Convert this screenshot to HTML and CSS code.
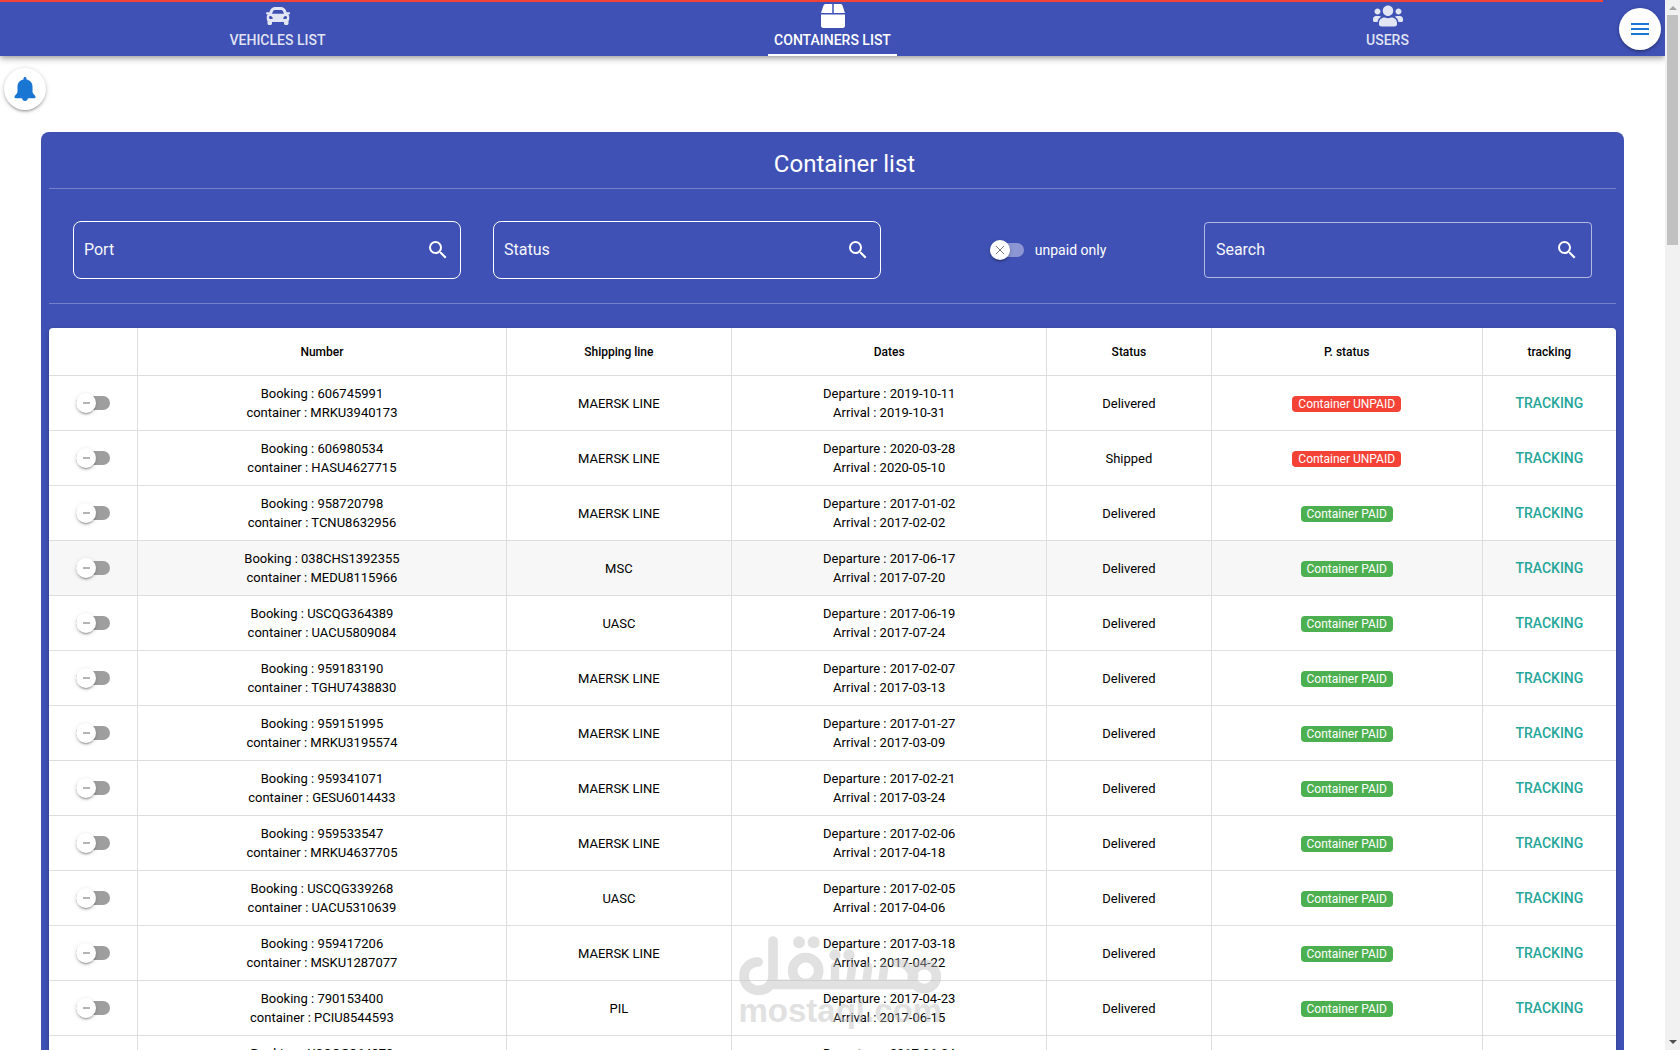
FILE: index.html
```html
<!DOCTYPE html>
<html lang="en">
<head>
<meta charset="UTF-8" />
<meta name="viewport" content="width=device-width, initial-scale=1" />
<title>Containers list</title>
<link rel="stylesheet" href="styles.css">
</head>
<body>

  <div class="app">
    <header class="header">
      <div class="loading-bar"></div>
      <nav class="tabs">
        <a class="tab" href="#vehicles">
          <svg class="tab-icon" viewBox="0 0 512 512" aria-hidden="true"><path d="M499.99 176h-59.87l-16.64-41.6C406.38 91.63 365.57 64 319.5 64h-127c-46.06 0-86.88 27.63-103.99 70.4L71.87 176H12.01C4.2 176-1.53 183.34.37 190.91l6 24C7.7 220.25 12.5 224 18.01 224h20.07C24.65 235.73 16 252.78 16 272v48c0 16.12 6.16 30.67 16 41.93V416c0 17.67 14.33 32 32 32h32c17.67 0 32-14.33 32-32v-32h256v32c0 17.67 14.33 32 32 32h32c17.67 0 32-14.33 32-32v-54.07c9.84-11.25 16-25.8 16-41.93v-48c0-19.22-8.65-36.27-22.07-48H494c5.51 0 10.31-3.75 11.64-9.09l6-24c1.89-7.57-3.84-14.91-11.65-14.91zm-352.06-17.83c7.29-18.22 24.94-30.17 44.57-30.17h127c19.63 0 37.28 11.95 44.57 30.17L384 208H128l19.93-49.83zM96 319.8c-19.2 0-32-12.76-32-31.9S76.8 256 96 256s48 28.71 48 47.85-28.8 15.95-48 15.95zm320 0c-19.2 0-48 3.19-48-15.95S396.8 256 416 256s32 12.76 32 31.9-12.8 31.9-32 31.9z"/></svg>
          <span class="tab-label">Vehicles list</span>
        </a>
        <a class="tab active" href="#containers" aria-current="page">
          <svg class="tab-icon" viewBox="0 0 512 512" aria-hidden="true"><path d="M509.5 184.6L458.9 32.8C452.4 13.2 434.1 0 413.4 0H272v192h238.7c-.4-2.5-.4-5-1.2-7.4zM240 0H98.6c-20.7 0-39 13.2-45.5 32.8L2.5 184.6c-.8 2.4-.8 4.9-1.2 7.4H240V0zM0 224v240c0 26.5 21.5 48 48 48h416c26.5 0 48-21.5 48-48V224H0z"/></svg>
          <span class="tab-label">Containers list</span>
        </a>
        <a class="tab" href="#users">
          <svg class="tab-icon wide" viewBox="0 0 640 512" aria-hidden="true"><path d="M96 224c35.3 0 64-28.7 64-64s-28.7-64-64-64-64 28.7-64 64 28.7 64 64 64zm448 0c35.3 0 64-28.7 64-64s-28.7-64-64-64-64 28.7-64 64 28.7 64 64 64zm32 32h-64c-17.6 0-33.5 7.1-45.1 18.6 40.3 22.1 68.9 62 75.1 109.4h66c17.7 0 32-14.3 32-32v-32c0-35.3-28.7-64-64-64zm-256 0c61.9 0 112-50.1 112-112S381.9 32 320 32 208 82.1 208 144s50.1 112 112 112zm76.8 32h-8.3c-20.8 10-43.9 16-68.5 16s-47.6-6-68.5-16h-8.3C179.6 288 128 339.6 128 403.2V432c0 26.5 21.5 48 48 48h288c26.5 0 48-21.5 48-48v-28.8c0-63.6-51.6-115.2-115.2-115.2zm-223.7-13.4C161.5 263.1 145.6 256 128 256H64c-35.3 0-64 28.7-64 64v32c0 17.7 14.3 32 32 32h65.9c6.3-47.4 34.9-87.3 75.2-109.4z"/></svg>
          <span class="tab-label">Users</span>
        </a>
      </nav>
      <button type="button" class="round-btn menu-btn" aria-label="Menu">
        <svg viewBox="0 0 24 24" aria-hidden="true"><path d="M3 18h18v-2H3v2zm0-5h18v-2H3v2zm0-7v2h18V6H3z"/></svg>
      </button>
    </header>

    <button type="button" class="round-btn bell-btn" aria-label="Notifications">
      <svg viewBox="0 0 24 24" aria-hidden="true"><path d="M12 0c-.9 0-1.500.7-1.500 1.500v1C6.800 3.200 4.500 6 4.500 9.500v4.500c0 1.600-.5 2.500-1.500 3.600-1 1-1.500 1.400-1.500 2.400 0 .8.500 1.200 1.300 1.200h6.300c.1 1.600 1.300 2.800 2.900 2.800s2.800-1.200 2.900-2.800h6.300c.8 0 1.300-.4 1.300-1.200 0-1-.5-1.400-1.500-2.400-1-1.100-1.500-2-1.500-3.600V9.500c0-3.500-2.300-6.300-6-7v-1C13.500.7 12.900 0 12 0z"/></svg>
    </button>

    <main class="card">
      <h1 class="card-title">Container list</h1>

      <div class="filters">
        <div class="field outlined">
          <input type="text" placeholder="Port" aria-label="Port" />
          <svg viewBox="0 0 24 24" aria-hidden="true"><path d="M15.500 14h-.79l-.28-.27A6.471 6.471 0 0 0 16 9.500 6.500 6.500 0 1 0 9.500 16c1.610 0 3.090-.59 4.230-1.570l.27.28v.79l5 4.990L20.490 19l-4.990-5zm-6 0C7.010 14 5 11.990 5 9.500S7.010 5 9.500 5 14 7.010 14 9.500 11.990 14 9.500 14z"/></svg>
        </div>
        <div class="field outlined">
          <input type="text" placeholder="Status" aria-label="Status" />
          <svg viewBox="0 0 24 24" aria-hidden="true"><path d="M15.500 14h-.79l-.28-.27A6.471 6.471 0 0 0 16 9.500 6.500 6.500 0 1 0 9.500 16c1.610 0 3.090-.59 4.230-1.570l.27.28v.79l5 4.990L20.490 19l-4.990-5zm-6 0C7.010 14 5 11.990 5 9.500S7.010 5 9.500 5 14 7.010 14 9.500 11.990 14 9.500 14z"/></svg>
        </div>
        <label class="unpaid">
          <input type="checkbox" class="toggle cross" />
          <span>unpaid only</span>
        </label>
        <div class="field">
          <input type="text" placeholder="Search" aria-label="Search" />
          <svg viewBox="0 0 24 24" aria-hidden="true"><path d="M15.500 14h-.79l-.28-.27A6.471 6.471 0 0 0 16 9.500 6.500 6.500 0 1 0 9.500 16c1.610 0 3.090-.59 4.230-1.570l.27.28v.79l5 4.990L20.490 19l-4.990-5zm-6 0C7.010 14 5 11.990 5 9.500S7.010 5 9.500 5 14 7.010 14 9.500 11.990 14 9.500 14z"/></svg>
        </div>
      </div>

      <table class="list">
        <colgroup>
          <col class="col-toggle"><col class="col-number"><col class="col-line"><col class="col-dates"><col class="col-status"><col class="col-paid"><col class="col-tracking">
        </colgroup>
        <thead>
          <tr><th></th><th>Number</th><th>Shipping line</th><th>Dates</th><th>Status</th><th>P. status</th><th>tracking</th></tr>
        </thead>
        <tbody>
          <tr>
            <td><input type="checkbox" class="toggle" aria-label="Select 606745991"></td>
            <td>Booking : 606745991<br>container : MRKU3940173</td>
            <td>MAERSK LINE</td>
            <td>Departure : 2019-10-11<br>Arrival : 2019-10-31</td>
            <td>Delivered</td>
            <td><span class="badge unpaid-badge">Container UNPAID</span></td>
            <td><button type="button" class="tracking">Tracking</button></td>
          </tr>
          <tr>
            <td><input type="checkbox" class="toggle" aria-label="Select 606980534"></td>
            <td>Booking : 606980534<br>container : HASU4627715</td>
            <td>MAERSK LINE</td>
            <td>Departure : 2020-03-28<br>Arrival : 2020-05-10</td>
            <td>Shipped</td>
            <td><span class="badge unpaid-badge">Container UNPAID</span></td>
            <td><button type="button" class="tracking">Tracking</button></td>
          </tr>
          <tr>
            <td><input type="checkbox" class="toggle" aria-label="Select 958720798"></td>
            <td>Booking : 958720798<br>container : TCNU8632956</td>
            <td>MAERSK LINE</td>
            <td>Departure : 2017-01-02<br>Arrival : 2017-02-02</td>
            <td>Delivered</td>
            <td><span class="badge">Container PAID</span></td>
            <td><button type="button" class="tracking">Tracking</button></td>
          </tr>
          <tr class="hovered">
            <td><input type="checkbox" class="toggle" aria-label="Select 038CHS1392355"></td>
            <td>Booking : 038CHS1392355<br>container : MEDU8115966</td>
            <td>MSC</td>
            <td>Departure : 2017-06-17<br>Arrival : 2017-07-20</td>
            <td>Delivered</td>
            <td><span class="badge">Container PAID</span></td>
            <td><button type="button" class="tracking">Tracking</button></td>
          </tr>
          <tr>
            <td><input type="checkbox" class="toggle" aria-label="Select USCQG364389"></td>
            <td>Booking : USCQG364389<br>container : UACU5809084</td>
            <td>UASC</td>
            <td>Departure : 2017-06-19<br>Arrival : 2017-07-24</td>
            <td>Delivered</td>
            <td><span class="badge">Container PAID</span></td>
            <td><button type="button" class="tracking">Tracking</button></td>
          </tr>
          <tr>
            <td><input type="checkbox" class="toggle" aria-label="Select 959183190"></td>
            <td>Booking : 959183190<br>container : TGHU7438830</td>
            <td>MAERSK LINE</td>
            <td>Departure : 2017-02-07<br>Arrival : 2017-03-13</td>
            <td>Delivered</td>
            <td><span class="badge">Container PAID</span></td>
            <td><button type="button" class="tracking">Tracking</button></td>
          </tr>
          <tr>
            <td><input type="checkbox" class="toggle" aria-label="Select 959151995"></td>
            <td>Booking : 959151995<br>container : MRKU3195574</td>
            <td>MAERSK LINE</td>
            <td>Departure : 2017-01-27<br>Arrival : 2017-03-09</td>
            <td>Delivered</td>
            <td><span class="badge">Container PAID</span></td>
            <td><button type="button" class="tracking">Tracking</button></td>
          </tr>
          <tr>
            <td><input type="checkbox" class="toggle" aria-label="Select 959341071"></td>
            <td>Booking : 959341071<br>container : GESU6014433</td>
            <td>MAERSK LINE</td>
            <td>Departure : 2017-02-21<br>Arrival : 2017-03-24</td>
            <td>Delivered</td>
            <td><span class="badge">Container PAID</span></td>
            <td><button type="button" class="tracking">Tracking</button></td>
          </tr>
          <tr>
            <td><input type="checkbox" class="toggle" aria-label="Select 959533547"></td>
            <td>Booking : 959533547<br>container : MRKU4637705</td>
            <td>MAERSK LINE</td>
            <td>Departure : 2017-02-06<br>Arrival : 2017-04-18</td>
            <td>Delivered</td>
            <td><span class="badge">Container PAID</span></td>
            <td><button type="button" class="tracking">Tracking</button></td>
          </tr>
          <tr>
            <td><input type="checkbox" class="toggle" aria-label="Select USCQG339268"></td>
            <td>Booking : USCQG339268<br>container : UACU5310639</td>
            <td>UASC</td>
            <td>Departure : 2017-02-05<br>Arrival : 2017-04-06</td>
            <td>Delivered</td>
            <td><span class="badge">Container PAID</span></td>
            <td><button type="button" class="tracking">Tracking</button></td>
          </tr>
          <tr>
            <td><input type="checkbox" class="toggle" aria-label="Select 959417206"></td>
            <td>Booking : 959417206<br>container : MSKU1287077</td>
            <td>MAERSK LINE</td>
            <td>Departure : 2017-03-18<br>Arrival : 2017-04-22</td>
            <td>Delivered</td>
            <td><span class="badge">Container PAID</span></td>
            <td><button type="button" class="tracking">Tracking</button></td>
          </tr>
          <tr>
            <td><input type="checkbox" class="toggle" aria-label="Select 790153400"></td>
            <td>Booking : 790153400<br>container : PCIU8544593</td>
            <td>PIL</td>
            <td>Departure : 2017-04-23<br>Arrival : 2017-06-15</td>
            <td>Delivered</td>
            <td><span class="badge">Container PAID</span></td>
            <td><button type="button" class="tracking">Tracking</button></td>
          </tr>
          <tr>
            <td><input type="checkbox" class="toggle" aria-label="Select USCQG364378"></td>
            <td>Booking : USCQG364378<br>container : UACU5364372</td>
            <td>UASC</td>
            <td>Departure : 2017-06-24<br>Arrival : 2017-07-24</td>
            <td>Delivered</td>
            <td><span class="badge">Container PAID</span></td>
            <td><button type="button" class="tracking">Tracking</button></td>
          </tr>
        </tbody>
      </table>
    </main>

    <div class="watermark">
      <svg viewBox="0 0 606 180" aria-hidden="true">
        <g fill="none" stroke="#bebebe" stroke-width="29" stroke-linecap="round">
          <path d="M57 78C30 78 15 98 15 120c0 24 18 43 43 43 26 0 44-18 44-44V15"/>
          <path d="M96 145H520"/>
          <circle cx="200" cy="104" r="39"/>
          <path d="M288 92v40M340 92l-6 40M388 92l-6 44M436 92l-6 44" stroke-width="25"/>
          <path d="M470 80c30-2 40 18 56 40" stroke-width="25"/>
          <circle cx="556" cy="122" r="36"/>
        </g>
        <g fill="#bebebe">
          <circle cx="180" cy="19" r="18"/>
          <circle cx="224" cy="19" r="18"/>
          <circle cx="288" cy="57" r="17"/>
          <circle cx="330" cy="57" r="17"/>
        </g>
      </svg>
      <span>mostaql.com</span>
    </div>
  </div>

  <div class="scrollbar" aria-hidden="true">
    <div class="arrow-up"></div>
    <div class="thumb"></div>
    <div class="arrow-down"></div>
  </div>

</body>
</html>
```
FILE: styles.css
```css
* {
  box-sizing: border-box;
}
body {
  margin: 0;
  display: flex;
  height: 100vh;
  overflow: hidden;
  font-family: Roboto, "Liberation Sans", sans-serif;
  font-size: 14px;
  color: #000;
  background: #fff;
}

.app {
  position: relative;
  flex: 1;
  overflow: hidden;
}

/* HEADER */
.header {
  position: relative;
  height: 56px;
  background: #3f51b5;
  box-shadow: 0 2px 4px -1px rgba(0,0,0,0.2), 0 4px 5px rgba(0,0,0,0.14), 0 1px 10px rgba(0,0,0,0.12);
}
.loading-bar {
  position: absolute;
  top: 0;
  left: 0;
  width: 96.3%;
  height: 2px;
  background: #f44336;
}
.tabs {
  display: flex;
  justify-content: space-around;
  height: 100%;
}
.tab {
  flex: 1;
  display: flex;
  flex-direction: column;
  align-items: center;
  padding-top: 4px;
  color: #fff;
  text-decoration: none;
}
.tab-icon {
  width: 24px;
  height: 24px;
  fill: currentColor;
  opacity: 0.85;
}
.tab-icon.wide {
  width: 30px;
}
.tab-label {
  height: 28px;
  padding: 0 6px;
  line-height: 24px;
  font-weight: 500;
  text-transform: uppercase;
  border-bottom: 2px solid transparent;
  color: rgba(255,255,255,0.85);
}
.active .tab-icon {
  opacity: 1;
}
.active .tab-label {
  color: #fff;
  border-color: #fff;
}

/* ROUND BUTTONS */
.round-btn {
  position: absolute;
  display: flex;
  align-items: center;
  justify-content: center;
  width: 42px;
  height: 42px;
  padding: 0;
  border: none;
  border-radius: 50%;
  background: #fff;
  cursor: pointer;
  box-shadow: 0 1px 5px rgba(0,0,0,0.2), 0 2px 2px rgba(0,0,0,0.14), 0 3px 1px -2px rgba(0,0,0,0.12);
}
.round-btn svg {
  width: 24px;
  height: 24px;
  fill: #1976d2;
}
.menu-btn {
  top: 8px;
  right: 4px;
}
.bell-btn {
  top: 68px;
  left: 4px;
}

/* CARD */
.card {
  margin: 76px 41px 0;
  padding: 8px;
  border-radius: 8px;
  background: #3f51b5;
  color: #fff;
}
.card-title {
  margin: 0;
  padding-left: 24px;
  line-height: 48px;
  font-size: 24px;
  font-weight: 400;
  text-align: center;
}
.filters {
  display: grid;
  grid-template-columns: 3fr 3fr 2fr 3fr;
  align-items: center;
  gap: 32px;
  margin-bottom: 24px;
  padding: 32px 24px 24px;
  border-top: 1px solid rgba(255,255,255,0.28);
  border-bottom: 1px solid rgba(255,255,255,0.28);
}
.field {
  display: flex;
  align-items: center;
  height: 56px;
  padding: 0 12px 0 11px;
  border: 1px solid rgba(255,255,255,0.6);
  border-radius: 4px;
}
.field.outlined {
  height: 58px;
  padding: 0 10px;
  border-color: #fff;
  border-radius: 8px;
}
.field input {
  flex: 1;
  min-width: 0;
  padding: 0 0 2px;
  border: none;
  outline: none;
  background: none;
  color: #fff;
  font-family: inherit;
  font-size: 16px;
}
.field input::placeholder {
  color: #fff;
  opacity: 0.95;
}
.field svg {
  width: 24px;
  height: 24px;
  fill: #fff;
}
.unpaid {
  display: flex;
  align-items: center;
  justify-content: center;
}

/* TOGGLE */
.toggle {
  appearance: none;
  position: relative;
  width: 34px;
  height: 20px;
  margin: 0;
  vertical-align: middle;
  cursor: pointer;
}
.toggle::before {
  content: "";
  position: absolute;
  top: 3px;
  left: 0;
  width: 34px;
  height: 14px;
  border-radius: 7px;
  background: #9e9e9e;
}
.toggle::after {
  content: "";
  position: absolute;
  top: 0;
  left: 0;
  width: 20px;
  height: 20px;
  border-radius: 50%;
  background: linear-gradient(#b4b4b4, #b4b4b4) center / 7px 2px no-repeat, #fff;
  box-shadow: 0 3px 1px -2px rgba(0,0,0,0.2), 0 2px 2px rgba(0,0,0,0.14), 0 1px 5px rgba(0,0,0,0.12);
}
.toggle.cross {
  margin: 0 11px;
}
.toggle.cross::before {
  background: rgba(255,255,255,0.4);
}
.toggle.cross::after {
  background:
    linear-gradient(45deg, transparent 44%, #777 44%, #777 56%, transparent 56%) center / 8px 8px no-repeat,
    linear-gradient(-45deg, transparent 44%, #777 44%, #777 56%, transparent 56%) center / 8px 8px no-repeat,
    #fff;
}

/* TABLE */
.list {
  width: 100%;
  table-layout: fixed;
  border-collapse: separate;
  border-spacing: 0;
  border-radius: 4px;
  background: #fff;
  color: #000;
  font-size: 13px;
  text-align: center;
  box-shadow: 0 1px 5px rgba(0,0,0,0.2), 0 2px 2px rgba(0,0,0,0.14), 0 3px 1px -2px rgba(0,0,0,0.12);
}
.col-toggle { width: 5.7%; }
.col-number { width: 23.5%; }
.col-line { width: 14.4%; }
.col-dates { width: 20.1%; }
.col-status { width: 10.5%; }
.col-paid { width: 17.3%; }
.col-tracking { width: 8.5%; }

.list th {
  height: 48px;
  padding: 0;
  font-size: 12px;
  font-weight: 500;
}
.list td {
  height: 55px;
  padding: 0;
  line-height: 19px;
}
.list th,
.list td {
  border-bottom: 1px solid #dedede;
  border-right: 1px solid #dedede;
}
.list th:last-child,
.list td:last-child {
  border-right: none;
}
.hovered td {
  background: #f7f7f7;
}
.badge {
  display: inline-block;
  padding: 2px 6px;
  border-radius: 4px;
  background: #4caf50;
  color: #fff;
  font-size: 12px;
  line-height: 12px;
  vertical-align: middle;
}
.unpaid-badge {
  background: #f44336;
}
.tracking {
  padding: 0;
  border: none;
  background: none;
  color: #26a69a;
  font-family: inherit;
  font-size: 14px;
  font-weight: 500;
  text-transform: uppercase;
  cursor: pointer;
}

/* WATERMARK */
.watermark {
  position: absolute;
  left: 50%;
  bottom: 24px;
  width: 202px;
  margin-left: -94px;
  color: #bebebe;
  opacity: 0.45;
  pointer-events: none;
}
.watermark svg {
  display: block;
  width: 100%;
}
.watermark span {
  display: block;
  line-height: 30px;
  font-family: "Liberation Sans", sans-serif;
  font-size: 33px;
  font-weight: 700;
}

/* SCROLLBAR */
.scrollbar {
  display: flex;
  flex-direction: column;
  align-items: center;
  width: 15px;
  padding: 6px 0;
  background: #f1f1f1;
}
.thumb {
  width: 11px;
  height: 230px;
  margin-top: 5px;
  background: #c1c1c1;
}
.arrow-up {
  border: 4px solid transparent;
  border-top: none;
  border-bottom-color: #a3a3a3;
}
.arrow-down {
  margin-top: auto;
  border: 4px solid transparent;
  border-bottom: none;
  border-top-color: #505050;
}
```
